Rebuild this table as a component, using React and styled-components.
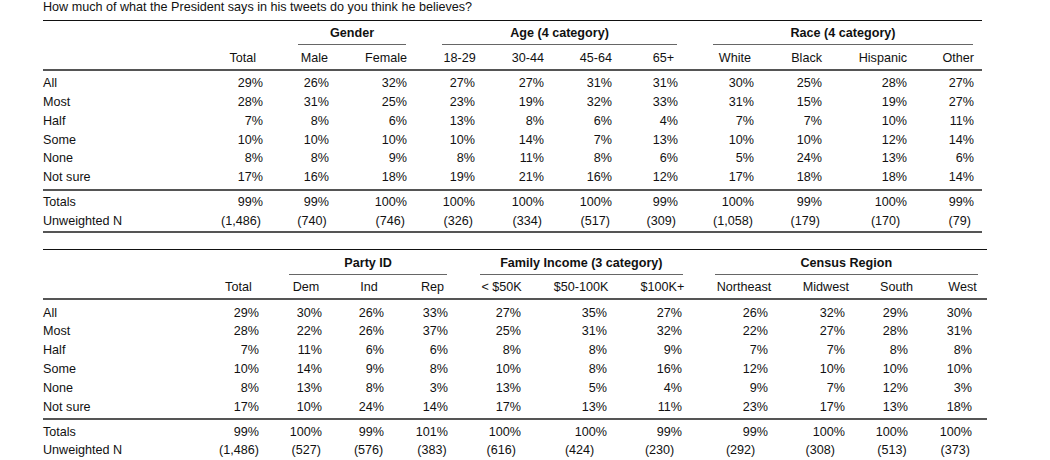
import React from 'react';
import styled, { createGlobalStyle } from 'styled-components';

const GlobalStyle = createGlobalStyle`
  body {
    margin: 0;
    background: #fff;
  }
`;

const Page = styled.div`
  padding-left: 43px;
  font-family: "Liberation Sans", Arial, Helvetica, sans-serif;
  font-size: 12.6px;
  color: #111;
`;

const Title = styled.div`
  line-height: 15px;
  margin-bottom: 4.5px;
`;

const Table = styled.div`
  width: ${p => p.$width}px;
  & + & {
    margin-top: 15.8px;
  }
`;

const TopRule = styled.div`
  height: 1.3px;
  background: #111;
`;

const MidRule = styled.div`
  height: 2px;
  background: #555;
  margin-top: ${p => p.$mt}px;
`;

const Row = styled.div`
  display: grid;
  grid-template-columns: ${p => p.$cols};
  line-height: 18.8px;
  margin-top: ${p => p.$mt || 0}px;
`;

const Body = styled.div`
  margin-top: ${p => p.$mt}px;
`;

const Blank = styled.div`
  grid-column: span ${p => p.$span};
`;

const GroupCell = styled.div`
  grid-column: span ${p => p.$span};
  margin: 0 ${p => p.$inR}px 0 ${p => p.$inL}px;
  padding-bottom: 1.3px;
  border-bottom: 1.4px solid #666;
  text-align: center;
  font-weight: bold;
  white-space: nowrap;
`;

const Label = styled.div`
  white-space: nowrap;
`;

const Cell = styled.div`
  text-align: right;
  white-space: nowrap;
  margin-right: ${p => p.$shift || 0}px;
`;

const tables = [
  {
    cols: '157px 63px 66px 78px 68px 69px 68px 66px 76px 68px 85px 67px 8px',
    width: 939,
    lead: 2,
    groups: [
      { label: 'Gender', span: 2, inL: 35, inR: 1 },
      { label: 'Age (4 category)', span: 4, inL: 35, inR: 1 },
      { label: 'Race (4 category)', span: 4, inL: 35, inR: 1 },
    ],
    heads: [
      ['Total', 7], ['Male', 1], ['Female', 0], ['18-29', -0.7], ['30-44', 0], ['45-64', 0],
      ['65+', 4], ['White', 3], ['Black', 0], ['Hispanic', 0], ['Other', 0],
    ],
    rows: [
      ['All', [29, 26, 32, 27, 27, 31, 31, 30, 25, 28, 27]],
      ['Most', [28, 31, 25, 23, 19, 32, 33, 31, 15, 19, 27]],
      ['Half', [7, 8, 6, 13, 8, 6, 4, 7, 7, 10, 11]],
      ['Some', [10, 10, 10, 10, 14, 7, 13, 10, 10, 12, 14]],
      ['None', [8, 8, 9, 8, 11, 8, 6, 5, 24, 13, 6]],
      ['Not sure', [17, 16, 18, 19, 21, 16, 12, 17, 18, 18, 14]],
    ],
    totals: [99, 99, 100, 100, 100, 100, 99, 100, 99, 100, 99],
    n: ['1,486', '740', '746', '326', '334', '517', '309', '1,058', '179', '170', '79'],
    nShift: [2, 2.3, 2, 2, 2, 2, 2, 1, 2, 6.7, 3],
  },
  {
    cols: '157px 59px 63px 62px 64px 73px 86px 75px 86px 77px 63px 64px 15px',
    width: 944,
    lead: 2,
    groups: [
      { label: 'Party ID', span: 3, inL: 30, inR: 0.7 },
      { label: 'Family Income (3 category)', span: 3, inL: 32, inR: -0.7 },
      { label: 'Census Region', span: 4, inL: 33, inR: -5.7 },
    ],
    heads: [
      ['Total', 7.3], ['Dem', 2.7], ['Ind', 6.3], ['Rep', 4], ['< $50K', -0.7], ['$50-100K', -1.3],
      ['$100K+', -2.3], ['Northeast', -3.3], ['Midwest', -4], ['South', -5], ['West', -4.7],
    ],
    rows: [
      ['All', [29, 30, 26, 33, 27, 35, 27, 26, 32, 29, 30]],
      ['Most', [28, 22, 26, 37, 25, 31, 32, 22, 27, 28, 31]],
      ['Half', [7, 11, 6, 6, 8, 8, 9, 7, 7, 8, 8]],
      ['Some', [10, 14, 9, 8, 10, 8, 16, 12, 10, 10, 10]],
      ['None', [8, 13, 8, 3, 13, 5, 4, 9, 7, 12, 3]],
      ['Not sure', [17, 10, 24, 14, 17, 13, 11, 23, 17, 13, 18]],
    ],
    totals: [99, 100, 99, 101, 100, 100, 99, 99, 100, 100, 100],
    n: ['1,486', '527', '576', '383', '616', '424', '230', '292', '308', '513', '373'],
    nShift: [0, 1, 0.7, 1.3, 5, 12.7, 7.7, 12.7, 10, 1.3, 2],
  },
];

const CrossTab = ({ table }) => (
  <Table $width={table.width}>
    <TopRule />
    <Row $cols={table.cols} $mt={3.6}>
      <Blank $span={table.lead} />
      {table.groups.map(g => (
        <GroupCell key={g.label} $span={g.span} $inL={g.inL} $inR={g.inR}>
          {g.label}
        </GroupCell>
      ))}
    </Row>
    <Row $cols={table.cols} $mt={3.2}>
      <Label />
      {table.heads.map(([h, shift]) => (
        <Cell key={h} $shift={shift}>{h}</Cell>
      ))}
    </Row>
    <MidRule $mt={1.5} />
    <Body $mt={3.2}>
      {table.rows.map(([label, values]) => (
        <Row key={label} $cols={table.cols}>
          <Label>{label}</Label>
          {values.map((v, i) => (
            <Cell key={i}>{v}%</Cell>
          ))}
        </Row>
      ))}
    </Body>
    <MidRule $mt={1.6} />
    <Body $mt={2.6}>
      <Row $cols={table.cols}>
        <Label>Totals</Label>
        {table.totals.map((v, i) => (
          <Cell key={i}>{v}%</Cell>
        ))}
      </Row>
      <Row $cols={table.cols}>
        <Label>Unweighted N</Label>
        {table.n.map((v, i) => (
          <Cell key={i} $shift={table.nShift[i]}>({v})</Cell>
        ))}
      </Row>
    </Body>
    <MidRule $mt={0.4} />
  </Table>
);

export default function App() {
  return (
    <Page>
      <GlobalStyle />
      <Title>How much of what the President says in his tweets do you think he believes?</Title>
      {tables.map((t, i) => (
        <CrossTab key={i} table={t} />
      ))}
    </Page>
  );
}
